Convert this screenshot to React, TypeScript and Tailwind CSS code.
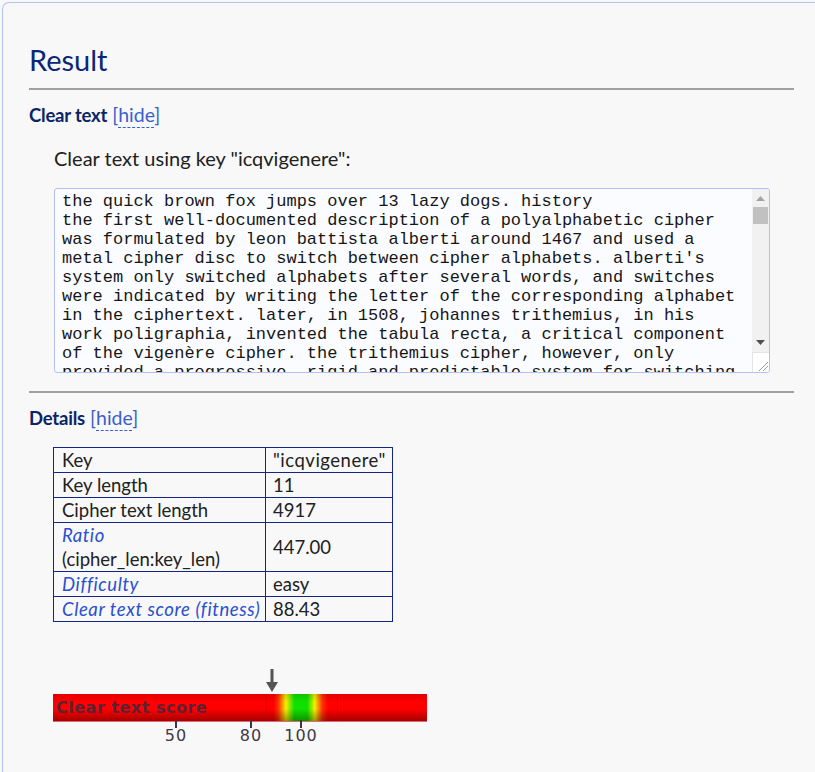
import React from 'react'

const sans = { fontFamily: 'Lato, "Noto Sans", sans-serif' }

const clearText =
  "the quick brown fox jumps over 13 lazy dogs. history\nthe first well-documented description of a polyalphabetic cipher was formulated by leon battista alberti around 1467 and used a metal cipher disc to switch between cipher alphabets. alberti's system only switched alphabets after several words, and switches were indicated by writing the letter of the corresponding alphabet in the ciphertext. later, in 1508, johannes trithemius, in his work poligraphia, invented the tabula recta, a critical component of the vigenère cipher. the trithemius cipher, however, only provided a progressive, rigid and predictable system for switching between cipher alphabets. in 1586 blaise de vigenère published a type of polyalphabetic cipher called an autokey cipher."

const rows: { label: React.ReactNode; value: string; link?: boolean }[] = [
  { label: 'Key', value: '"icqvigenere"' },
  { label: 'Key length', value: '11' },
  { label: 'Cipher text length', value: '4917' },
  {
    label: (
      <>
        <span className="italic tracking-[0.5px] text-[#2a4fd0]">Ratio</span>
        <br />
        (cipher_len:key_len)
      </>
    ),
    value: '447.00',
  },
  { label: 'Difficulty', value: 'easy', link: true },
  { label: 'Clear text score (fitness)', value: '88.43', link: true },
]

function SectionTitle({ title }: { title: string }) {
  return (
    <div className="h-[24px] flex items-baseline gap-[5px] leading-[24px]">
      <span className="text-[18.5px] leading-[24px] font-bold text-[#0b2466] tracking-[-0.2px]">{title}</span>
      <a className="text-[19.5px] leading-[24px] text-[#3a5fcd] whitespace-nowrap">
        [<span className="underline decoration-dashed decoration-1 underline-offset-[5px]">hide</span>]
      </a>
    </div>
  )
}

function ScoreBar() {
  const ticks = [
    { x: 123, label: '50' },
    { x: 198, label: '80' },
    { x: 248, label: '100' },
  ]
  return (
    <div className="relative ml-[24px] w-[374px] h-[85px]">
      <svg className="absolute left-[213px] top-[3px]" width="12" height="23" viewBox="0 0 12 23">
        <rect x="4.5" y="0" width="3" height="15" fill="#555" />
        <polygon points="0,13 12,13 6,23" fill="#555" />
      </svg>
      <div
        className="absolute left-0 top-[28px] w-[374px] h-[28px] border-b border-[#d86a7a]"
        style={{
          background:
            'linear-gradient(to bottom, rgba(0,0,0,0.12) 0%, rgba(0,0,0,0) 30%, rgba(0,0,0,0) 55%, rgba(0,0,0,0.35) 100%), linear-gradient(to right, #ff0000 0%, #ff0000 59%, #ff3000 60.2%, #f4f000 62.3%, #10e000 64.5%, #10e000 68%, #f4f000 70%, #ff3000 72%, #ff0000 73.5%, #ff0000 100%)',
        }}
      >
        <div className="absolute left-[213px] top-0 h-full w-px bg-[#c00000]/40" />
        <div className="absolute left-[284px] top-0 h-full w-px bg-[#c00000]/40" />
        <span
          className="absolute left-[3px] top-[4px] text-[16px] leading-[20px] font-bold tracking-[0.5px] text-[#5a2233]"
          style={{ fontFamily: '"DejaVu Sans", sans-serif' }}
        >
          Clear text score
        </span>
      </div>
      {ticks.map((t) => (
        <React.Fragment key={t.label}>
          <div className="absolute top-[54px] w-[2px] h-[8px] bg-[#443344]" style={{ left: t.x - 1 }} />
          <span
            className="absolute top-[61px] -translate-x-1/2 text-[16px] leading-[18px] tracking-[1px] text-[#3f3848]"
            style={{ left: t.x, fontFamily: '"DejaVu Sans", sans-serif' }}
          >
            {t.label}
          </span>
        </React.Fragment>
      ))}
    </div>
  )
}

export default function App() {
  return (
    <div className="min-h-[772px] bg-[#f8f8f8] pt-[2px] pl-[2px] overflow-hidden" style={sans}>
      <div className="border-l border-t border-[#b3c1ee] rounded-tl-[7px] bg-[#f8f8f8] pl-[26px] pr-[21px] pt-[40px] min-h-[770px]">
        <h2 className="text-[29px] leading-[34px] text-[#0c2678]">Result</h2>
        <div className="mt-[11px] h-[2px] bg-[#a0a0a0]" />

        <div className="mt-[13px]">
          <SectionTitle title="Clear text" />
        </div>
        <p className="mt-[19px] ml-[25px] text-[20px] leading-[24px] text-[#202122]">
          Clear text using key "icqvigenere":
        </p>

        <div className="mt-[18px] ml-[25px] w-[716px] h-[185px] flex border border-[#b3c1ee] rounded-[3px] bg-[#fbfcff] overflow-hidden">
          <div
            className="flex-1 pl-[7px] pr-[12px] pt-[3px] whitespace-pre-wrap break-words overflow-hidden text-[17px] leading-[19px] text-[#161616]"
            style={{ fontFamily: '"Liberation Mono", "Courier New", monospace' }}
          >
            {clearText}
          </div>
          <div className="w-[17px] flex flex-col">
            <div className="flex-1 bg-[#f1f1f1] flex flex-col items-center">
              <svg className="mt-[7px]" width="9" height="5" viewBox="0 0 9 5">
                <polygon points="0,5 9,5 4.5,0" fill="#a3a3a3" />
              </svg>
              <div className="mt-[6px] w-[15px] h-[17px] bg-[#c1c1c1]" />
              <div className="flex-1" />
              <svg className="mb-[7px]" width="9" height="5" viewBox="0 0 9 5">
                <polygon points="0,0 9,0 4.5,5" fill="#505050" />
              </svg>
            </div>
            <div className="h-[20px] bg-white border-t border-l border-[#e4e4e4] flex items-end justify-end">
              <svg width="12" height="12" viewBox="0 0 12 12">
                <line x1="2" y1="11" x2="11" y2="2" stroke="#9a9a9a" strokeWidth="1" />
                <line x1="6" y1="11" x2="11" y2="6" stroke="#9a9a9a" strokeWidth="1" />
              </svg>
            </div>
          </div>
        </div>

        <div className="mt-[18px] h-[2px] bg-[#a0a0a0]" />

        <div className="mt-[13px]">
          <SectionTitle title="Details" />
        </div>

        <table className="mt-[17px] ml-[24px] border-collapse text-[18.5px] leading-[24px] text-[#202122]">
          <tbody>
            {rows.map((r, i) => (
              <tr key={i}>
                <td className="w-[212px] max-w-[212px] border border-[#14258a] pl-[8px] pr-[2px] whitespace-nowrap align-middle">
                  {r.link ? (
                    <span className="italic tracking-[0.6px] text-[#2a4fd0]">{r.label}</span>
                  ) : (
                    r.label
                  )}
                </td>
                <td className="w-[127px] max-w-[127px] border border-[#14258a] pl-[7px] pr-[2px] whitespace-nowrap align-middle">
                  {i === 0 ? <span className="tracking-[0.5px]">{r.value}</span> : r.value}
                </td>
              </tr>
            ))}
          </tbody>
        </table>

        <div className="mt-[44px]">
          <ScoreBar />
        </div>
      </div>
    </div>
  )
}
